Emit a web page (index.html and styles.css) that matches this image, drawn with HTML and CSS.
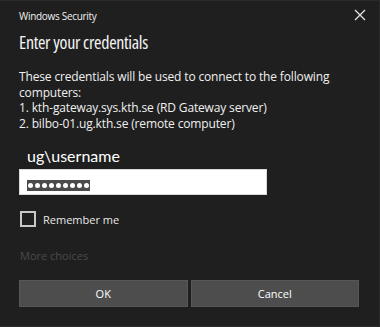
FILE: index.html
```html
<!DOCTYPE html>
<html lang="en">
<head>
    <meta charset="UTF-8">
    <meta name="viewport" content="width=device-width, initial-scale=1.0">
    <title>Windows Security</title>
    <link rel="stylesheet" href="styles.css">
</head>
<body>

    <div class="dialog">
        <!-- title bar -->
        <div class="titlebar">
            <span class="app-name">Windows Security</span>
            <svg class="close" width="12" height="12" viewBox="0 0 12 12">
                <path d="M1 1 L11 11 M11 1 L1 11" stroke="#e6e6e6" stroke-width="1.3" fill="none"/>
            </svg>
        </div>

        <h1 class="heading">Enter your credentials</h1>

        <p class="message">
            These credentials will be used to connect to the following computers:<br>
            1. kth-gateway.sys.kth.se (RD Gateway server)<br>
            2. bilbo-01.ug.kth.se (remote computer)
        </p>

        <div class="user">ug\username</div>

        <div class="password">
            <span class="selected">
                <i></i><i></i><i></i><i></i><i></i><i></i><i></i><i></i><i></i>
            </span>
        </div>

        <label class="remember">
            <span class="box"></span>
            <span>Remember me</span>
        </label>

        <div class="more">More choices</div>

        <div class="buttons">
            <button class="btn">OK</button>
            <button class="btn">Cancel</button>
        </div>
    </div>

</body>
</html>
```

FILE: styles.css
```css
html, body { margin: 0; padding: 0; }
body { background: #1f1f1f; width: 380px; height: 327px; overflow: hidden; font-family: "Open Sans", "Noto Sans", sans-serif; color: #ffffff; }
.dialog { box-sizing: border-box; height: 327px; padding: 0 20px 0 19px; border: 1px solid #2a2a2a; border-left: none; }

.titlebar { height: 29px; display: flex; align-items: center; justify-content: space-between; }
.app-name { font-size: 10px; color: #f0f0f0; letter-spacing: -0.3px; }
.close { margin-right: -7px; margin-top: -1px; }

.heading { margin: 0; font-size: 18px; font-stretch: 87%; line-height: 24px; font-weight: 400; color: #f4f4f4; letter-spacing: -0.3px; }

.message { margin: 15px 0 0; font-size: 12px; line-height: 15.5px; color: #f0f0f0; max-width: 330px; letter-spacing: -0.15px; }

.user { margin-top: 15px; padding-left: 8px; font-family: "Lato", sans-serif; font-size: 16px; line-height: 20px; color: #ffffff; }

.password { box-sizing: border-box; display: flex; align-items: flex-start; margin-top: 3px; width: 248px; height: 26px; background: #ffffff; border: 1px solid #d9d9d9; padding: 10px 0 0 7px; }
.selected { display: flex; gap: 2px; align-items: center; background: #4b4b4b; height: 11px; padding: 0 1px; }
.selected i { width: 5px; height: 5px; border-radius: 50%; background: #ffffff; }

.remember { margin-top: 16px; display: flex; align-items: center; gap: 7px; font-size: 11px; color: #e8e8e8; height: 16px; padding-left: 1px; }
.box { box-sizing: border-box; width: 16px; height: 16px; border: 2px solid #c8c8c8; }

.more { margin-top: 21px; font-size: 11px; line-height: 16px; color: #4a4a4a; padding-left: 1px; }

.buttons { margin-top: 16px; display: grid; grid-template-columns: 1fr 1fr; gap: 3px; }
.btn { height: 27px; background: #4d4d4d; border: 1px solid #575757; color: #ffffff; font-family: inherit; font-size: 11px; padding: 0; }
```
